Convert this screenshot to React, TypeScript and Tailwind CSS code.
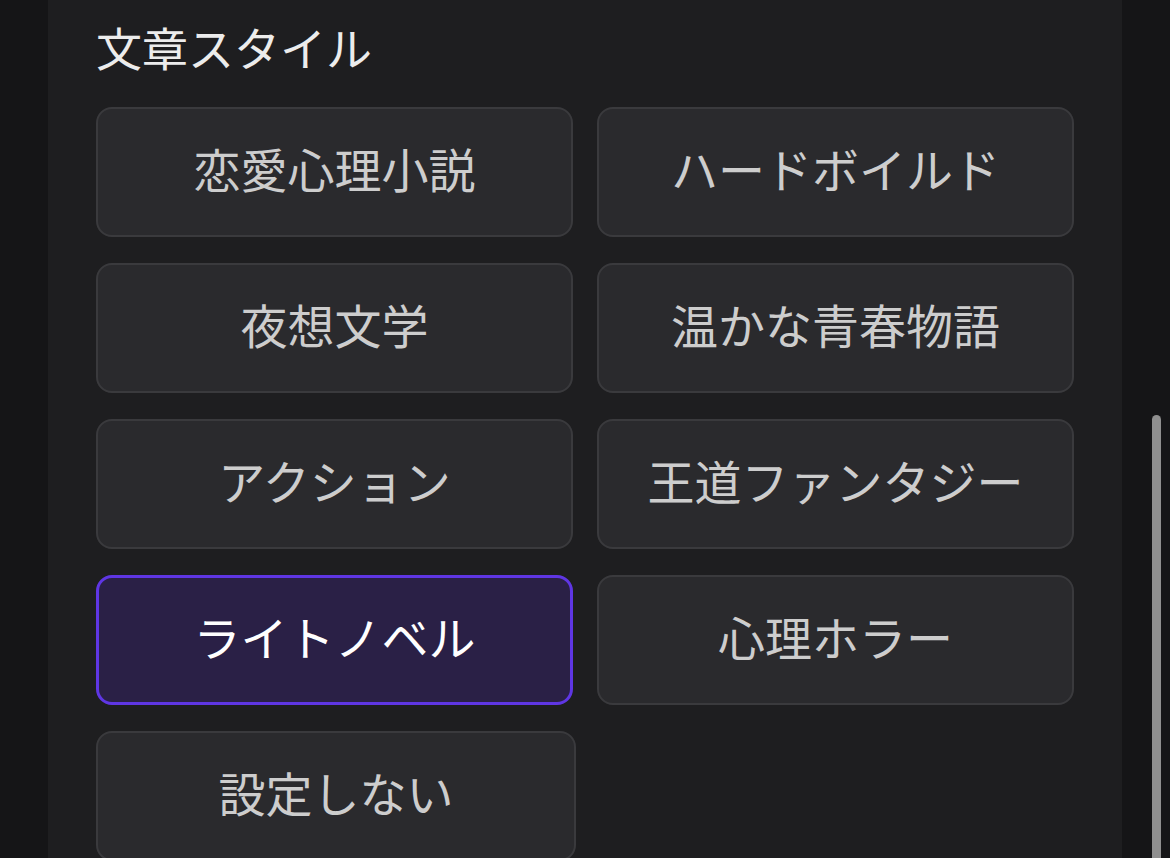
const styles = [
  "恋愛心理小説",
  "ハードボイルド",
  "夜想文学",
  "温かな青春物語",
  "アクション",
  "王道ファンタジー",
  "ライトノベル",
  "心理ホラー",
];

const selected = "ライトノベル";

const StyleButton = ({ label, active, wide }: { label: string; active?: boolean; wide?: boolean }) => (
  <button
    className={
      "h-[130px] rounded-[16px] flex items-center justify-center pb-[9px] text-[47px] leading-none " +
      (wide ? "w-[480px] " : "w-[477px] ") +
      (active
        ? "border-[3px] bg-[#2a2046] border-[#5f36e4] text-white"
        : "border-2 bg-[#2a2a2d] border-[#3a3a3d] text-[#cdcdcd]")
    }
  >
    {label}
  </button>
);

export default function App() {
  return (
    <div
      className="relative w-[1170px] h-[858px] overflow-hidden bg-[#151517] pl-[48px]"
      style={{ fontFamily: '"Noto Sans CJK JP", "Noto Sans", sans-serif' }}
    >
      <div className="w-[1074px] h-full bg-[#1e1e20] px-[48px] pt-[16px]">
        <h2 className="text-[46px] leading-[60px] text-[#ececec] font-normal">文章スタイル</h2>
        <div className="mt-[31px] grid grid-cols-[477px_477px] gap-x-[24px] gap-y-[26px]">
          {styles.map((s) => (
            <StyleButton key={s} label={s} active={s === selected} />
          ))}
          <StyleButton label="設定しない" wide />
        </div>
      </div>
      <div className="absolute left-[1152px] top-[415px] w-[9px] h-[460px] rounded-full bg-[#8f8f8f]" />
    </div>
  );
}
